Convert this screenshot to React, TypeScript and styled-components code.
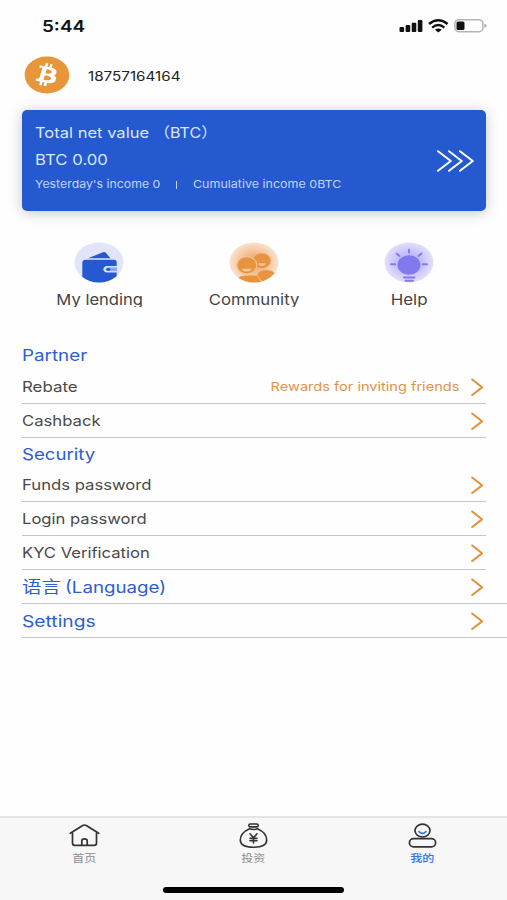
import React from 'react';
import styled, { createGlobalStyle } from 'styled-components';
import { FaBitcoin } from 'react-icons/fa';

const GlobalStyle = createGlobalStyle`
  * { box-sizing: border-box; }
  body { margin: 0; background: #fefefe; }
`;

const Screen = styled.div`
  display: flex;
  flex-direction: column;
  width: 507px;
  height: 900px;
  overflow: hidden;
  background: #fefefe;
  color: #444;
  font-family: Inter, 'Noto Sans CJK SC', sans-serif;
`;

/* Wide lettering: each label is stretched horizontally from its anchor edge. */
const Wide = styled.span<{ $x: number; $from?: 'left' | 'center' | 'right' }>`
  display: inline-block;
  white-space: pre;
  transform: scaleX(${(p) => p.$x});
  transform-origin: ${(p) => p.$from ?? 'left'} center;
`;

const StatusBar = styled.header`
  display: flex;
  align-items: center;
  justify-content: space-between;
  height: 52px;
  padding: 0 20px 0 42px;
`;

const Clock = styled(Wide)`
  color: #111;
  font-size: 16px;
  font-weight: 600;
  line-height: 20px;
`;

const StatusIcons = styled.div`
  display: flex;
  align-items: center;
  svg { display: block; }
`;

const Profile = styled.section`
  display: flex;
  align-items: center;
  gap: 18px;
  height: 46px;
  padding-left: 24px;
`;

const Coin = styled(FaBitcoin)`
  width: 46px;
  height: 38px;
  color: #e8963a;
`;

const Phone = styled(Wide)`
  color: #222;
  font-size: 13px;
  line-height: 18px;
  padding-top: 1px;
`;

const Card = styled.section`
  display: flex;
  align-items: center;
  justify-content: space-between;
  height: 101px;
  margin: 12px 21px 0 22px;
  padding: 0 12px 0 13px;
  border-radius: 5px;
  background: #2559d0;
  box-shadow: 0 2px 14px rgba(0, 0, 0, 0.22);
  color: #dce6fb;
`;

const Figures = styled.div`
  display: flex;
  flex-direction: column;
  align-self: stretch;
  padding-top: 10px;
`;

const Figure = styled.div`
  display: flex;
  height: 27px;
  font-size: 14.7px;
  line-height: 27px;
`;

const Unit = styled.div`
  width: 60px;
  margin-left: 18px;
`;

const Income = styled.div`
  display: flex;
  height: 17px;
  color: #c3d4f7;
  font-size: 11px;
  line-height: 21px;
`;

const IncomePart = styled.div<{ $w: number }>`
  width: ${(p) => p.$w}px;
`;

const Divider = styled.div`
  width: 1px;
  height: 8px;
  margin: 7px 16px 0 1px;
  background: #c3d4f7;
`;

const Shortcuts = styled.nav`
  display: flex;
  height: 97px;
  margin-top: 31px;
  padding: 0 21px 0 22px;
`;

const Shortcut = styled.a`
  display: flex;
  flex: 1;
  flex-direction: column;
  align-items: center;
  svg { display: block; }
`;

const ShortcutLabel = styled.div`
  height: 17px;
  margin-top: 7px;
  overflow: hidden;
  padding: 0 12px;
  font-size: 14.8px;
  line-height: 21px;
`;

const Menu = styled.main`
  display: flex;
  flex: 1;
  flex-direction: column;
  padding-left: 22px;
`;

const Heading = styled.h2<{ $h: number }>`
  height: ${(p) => p.$h}px;
  margin: 0;
  color: #2c5fd0;
  font-size: 16.5px;
  font-weight: 400;
  line-height: 32px;
`;

const Row = styled.div<{ $full?: boolean }>`
  display: flex;
  align-items: center;
  height: 34px;
  margin-right: ${(p) => (p.$full ? 0 : 21)}px;
  padding-right: ${(p) => (p.$full ? 24 : 3)}px;
  border-bottom: 1px solid #c6c6c6;
  color: ${(p) => (p.$full ? '#2c5fd0' : '#4a4a4a')};
  font-size: ${(p) => (p.$full ? 16.5 : 14.7)}px;
  line-height: 24px;
  svg { display: block; }
`;

const RowLabel = styled(Wide)`
  padding-top: 1px;
`;

const Han = styled.span`
  width: 43px;
`;

const RowNote = styled.div`
  flex: 1;
  padding: 1px 12px 0 0;
  color: #e2924a;
  font-size: 12px;
  text-align: right;
`;

const Spacer = styled.div`
  flex: 1;
`;

const TabBar = styled.footer`
  display: flex;
  flex-direction: column;
  align-items: center;
  height: 84px;
  border-top: 2px solid #e4e4e4;
  background: #f7f7f7;
`;

const Tabs = styled.nav`
  display: flex;
  width: 100%;
  height: 69px;
`;

const Tab = styled.a<{ $active?: boolean }>`
  display: flex;
  flex: 1;
  flex-direction: column;
  align-items: center;
  padding-top: 5px;
  color: ${(p) => (p.$active ? '#3274e6' : '#8c8c8c')};
  font-size: 10.2px;
  font-weight: ${(p) => (p.$active ? 500 : 400)};
  line-height: 20px;
  svg { display: block; }
`;

const HomeIndicator = styled.div`
  width: 181px;
  height: 5.5px;
  border-radius: 3px;
  background: #000;
`;

const Chevron = () => (
  <svg width="12" height="18" viewBox="0 0 12 18" fill="none" stroke="#e2923e" strokeWidth="2.1" strokeLinecap="round" strokeLinejoin="round">
    <path d="M1.200 1.500 11 9.300 1.200 17" />
  </svg>
);

const Signal = () => (
  <svg width="55" height="16" viewBox="0 0 55 16">
    <g fill="#111">
      <rect x="0.5" y="9" width="4.6" height="5" rx="1" />
      <rect x="6.600" y="7" width="4.600" height="7" rx="1" />
      <rect x="12.700" y="4.800" width="4.600" height="9.200" rx="1" />
      <rect x="18.800" y="2" width="4.600" height="12" rx="1" />
    </g>
    <g fill="none" stroke="#111" strokeWidth="2.4">
      <path d="M30 6Q39.300-1.500 48.600 6" />
      <path d="M33.200 9.600Q39.300 4.600 45.400 9.600" />
    </g>
    <path d="M35.900 11.700Q39.300 9.100 42.700 11.700L39.300 14.400Z" fill="#111" />
  </svg>
);

const Battery = () => (
  <svg width="33" height="16" viewBox="0 0 33 16">
    <rect x=".9" y="1.700" width="28" height="12" rx="3.800" fill="#fff" stroke="#b4b4b4" strokeWidth="1.500" />
    <rect x="2.500" y="3.500" width="8" height="8.600" rx="1.600" fill="#111" />
    <path d="M30.300 5.800q2.400 0 2.400 2t-2.400 2Z" fill="#b4b4b4" />
  </svg>
);

const TripleChevron = () => (
  <svg width="38" height="24" viewBox="0 0 38 24" fill="none" stroke="#fff" strokeWidth="2" strokeLinecap="round" strokeLinejoin="round">
    <path d="M2 2.200 14.800 12 2 21.800M13 2.200 25.800 12 13 21.800M24 2.200 36.800 12 24 21.800" />
  </svg>
);

const WalletIcon = () => (
  <svg width="50" height="41" viewBox="0 0 50 41">
    <defs>
      <clipPath id="walletClip"><ellipse cx="25" cy="20.400" rx="24.500" ry="20" /></clipPath>
    </defs>
    <g clipPath="url(#walletClip)">
      <rect width="50" height="41" fill="#e2e4fa" />
      <path d="M14 16.200 29 10.300q1.800-.6 3 .8l4.500 5.100Z" fill="#2559d0" />
      <path d="M8.300 21q0-3.300 3.400-3.300H40q2.700 0 2.700 2.700V41H8.300Z" fill="#2559d0" />
      <path d="M43.500 24H33q-3.600.4-3.600 3.300t3.600 3.300h10.500Z" fill="#d6defa" />
      <path d="M43 25.600h-8.500q-2 .3-2 1.700t2 1.700H43Z" fill="#8aa6ea" />
      <ellipse cx="34.200" cy="27.300" rx="2" ry="1.600" fill="#2559d0" />
    </g>
  </svg>
);

const CommunityIcon = () => (
  <svg width="50" height="41" viewBox="0 0 50 41">
    <defs>
      <radialGradient id="communityGlow">
        <stop offset=".3" stopColor="#f0b27a" />
        <stop offset="1" stopColor="#f9e4d1" />
      </radialGradient>
      <clipPath id="communityClip"><ellipse cx="25" cy="20.400" rx="24.500" ry="20" /></clipPath>
    </defs>
    <g clipPath="url(#communityClip)">
      <rect width="50" height="41" fill="url(#communityGlow)" />
      <path d="M6 41q1-7.500 11-7.500h11l5 7.500Z" fill="#e8933d" />
      <path d="M28 33q2-5 9-5T47 33v8H34Z" fill="#e8933d" stroke="#efb27a" strokeWidth=".7" />
      <ellipse cx="32.700" cy="18.800" rx="9" ry="7.700" fill="#e8933d" stroke="#f1b987" strokeWidth=".8" />
      <path d="M29 21.200h8q-1 2.800-4 2.800t-4-2.800Z" fill="#f5c597" />
      <ellipse cx="17.800" cy="23.300" rx="10" ry="8.700" fill="#e8933d" stroke="#f4c598" strokeWidth="1.100" />
      <path d="M12.500 26.800h10.400q-1.400 2.800-5.200 2.800t-5.200-2.800Z" fill="#f5c597" />
    </g>
  </svg>
);

const HelpIcon = () => (
  <svg width="50" height="41" viewBox="0 0 50 41">
    <defs>
      <radialGradient id="helpGlow">
        <stop offset=".35" stopColor="#bab6fa" />
        <stop offset="1" stopColor="#e2e0fb" />
      </radialGradient>
    </defs>
    <ellipse cx="25" cy="20.400" rx="24.500" ry="20" fill="url(#helpGlow)" />
    <ellipse cx="25" cy="23" rx="11.500" ry="9.800" fill="#8279ec" />
    <path d="M25 7.600v3M12.500 11.500l3 2.500M37.500 11.500l-3 2.500M7 22.300h4.300M38.700 22.300H43M20 35.500h10.500M21.500 38.800h7.500" fill="none" stroke="#8279ec" strokeWidth="1.900" strokeLinecap="round" />
  </svg>
);

const HomeIcon = () => (
  <svg width="31" height="25" viewBox="0 0 31 25" fill="none" stroke="#333" strokeWidth="1.700" strokeLinecap="round" strokeLinejoin="round">
    <path d="M1.300 10.300 13.700 2.500q1.800-1 3.600 0L29.700 10.300" />
    <path d="M3.500 10v10.300q0 2 2.300 2h19.400q2.300 0 2.300-2V10" />
    <path d="M12.800 22v-4.200q0-2 2.700-2t2.700 2V22" />
  </svg>
);

const MoneyIcon = () => (
  <svg width="29" height="25" viewBox="0 0 29 25" fill="none" stroke="#333" strokeWidth="1.600" strokeLinecap="round" strokeLinejoin="round">
    <rect x="9.800" y="1" width="9.400" height="2.900" rx="1.450" />
    <path d="M10.600 5.800C5.500 8 1.300 12.200 1.300 17c0 4.800 4.200 7.200 13.200 7.200s13.200-2.400 13.200-7.200c0-4.800-4.200-9-9.300-11.200q-3.900 1.400-7.800 0Z" />
    <path d="M11 10.800l3.500 3.900 3.500-3.900M14.500 14.700v5.300M11 15.200h7M11 17.600h7" />
  </svg>
);

const UserIcon = () => (
  <svg width="29" height="25" viewBox="0 0 29 25" fill="none" stroke="#333" strokeWidth="1.700" strokeLinecap="round">
    <ellipse cx="14.500" cy="7.600" rx="7.500" ry="6.400" />
    <rect x="1.400" y="15.600" width="26.200" height="8.300" rx="4.150" />
    <path d="M11 8.600q3.500 3.600 7 0" stroke="#3b74e0" />
  </svg>
);

export default function App() {
  return (
    <Screen>
      <GlobalStyle />
      <StatusBar>
        <Clock $x={1.18}>5:44</Clock>
        <StatusIcons><Signal /><Battery /></StatusIcons>
      </StatusBar>
      <Profile>
        <Coin preserveAspectRatio="none" />
        <Phone $x={1.17}>18757164164</Phone>
      </Profile>
      <Card>
        <Figures>
          <Figure>
            <Wide $x={1.125}>Total net value</Wide>
            <Unit><Wide $x={1.09}>（BTC）</Wide></Unit>
          </Figure>
          <Figure><Wide $x={1.14}>BTC 0.00</Wide></Figure>
          <Income>
            <IncomePart $w={140}><Wide $x={1.12}>Yesterday's income 0</Wide></IncomePart>
            <Divider />
            <IncomePart $w={150}><Wide $x={1.135}>Cumulative income 0BTC</Wide></IncomePart>
          </Income>
        </Figures>
        <TripleChevron />
      </Card>
      <Shortcuts>
        <Shortcut>
          <WalletIcon />
          <ShortcutLabel><Wide $x={1.12} $from="center">My lending</Wide></ShortcutLabel>
        </Shortcut>
        <Shortcut>
          <CommunityIcon />
          <ShortcutLabel><Wide $x={1.13} $from="center">Community</Wide></ShortcutLabel>
        </Shortcut>
        <Shortcut>
          <HelpIcon />
          <ShortcutLabel><Wide $x={1.14} $from="center">Help</Wide></ShortcutLabel>
        </Shortcut>
      </Shortcuts>
      <Menu>
        <Heading $h={31}><Wide $x={1.14}>Partner</Wide></Heading>
        <Row>
          <RowLabel $x={1.15}>Rebate</RowLabel>
          <RowNote><Wide $x={1.215} $from="right">Rewards for inviting friends</Wide></RowNote>
          <Chevron />
        </Row>
        <Row><RowLabel $x={1.135}>Cashback</RowLabel><Spacer /><Chevron /></Row>
        <Heading $h={30}><Wide $x={1.13}>Security</Wide></Heading>
        <Row><RowLabel $x={1.135}>Funds password</RowLabel><Spacer /><Chevron /></Row>
        <Row><RowLabel $x={1.13}>Login password</RowLabel><Spacer /><Chevron /></Row>
        <Row><RowLabel $x={1.13}>KYC Verification</RowLabel><Spacer /><Chevron /></Row>
        <Row $full><Han><RowLabel $x={1.18}>语言</RowLabel></Han><RowLabel $x={1.135}>(Language)</RowLabel><Spacer /><Chevron /></Row>
        <Row $full><RowLabel $x={1.165}>Settings</RowLabel><Spacer /><Chevron /></Row>
      </Menu>
      <TabBar>
        <Tabs>
          <Tab><HomeIcon /><Wide $x={1.18} $from="center">首页</Wide></Tab>
          <Tab><MoneyIcon /><Wide $x={1.18} $from="center">投资</Wide></Tab>
          <Tab $active><UserIcon /><Wide $x={1.18} $from="center">我的</Wide></Tab>
        </Tabs>
        <HomeIndicator />
      </TabBar>
    </Screen>
  );
}
